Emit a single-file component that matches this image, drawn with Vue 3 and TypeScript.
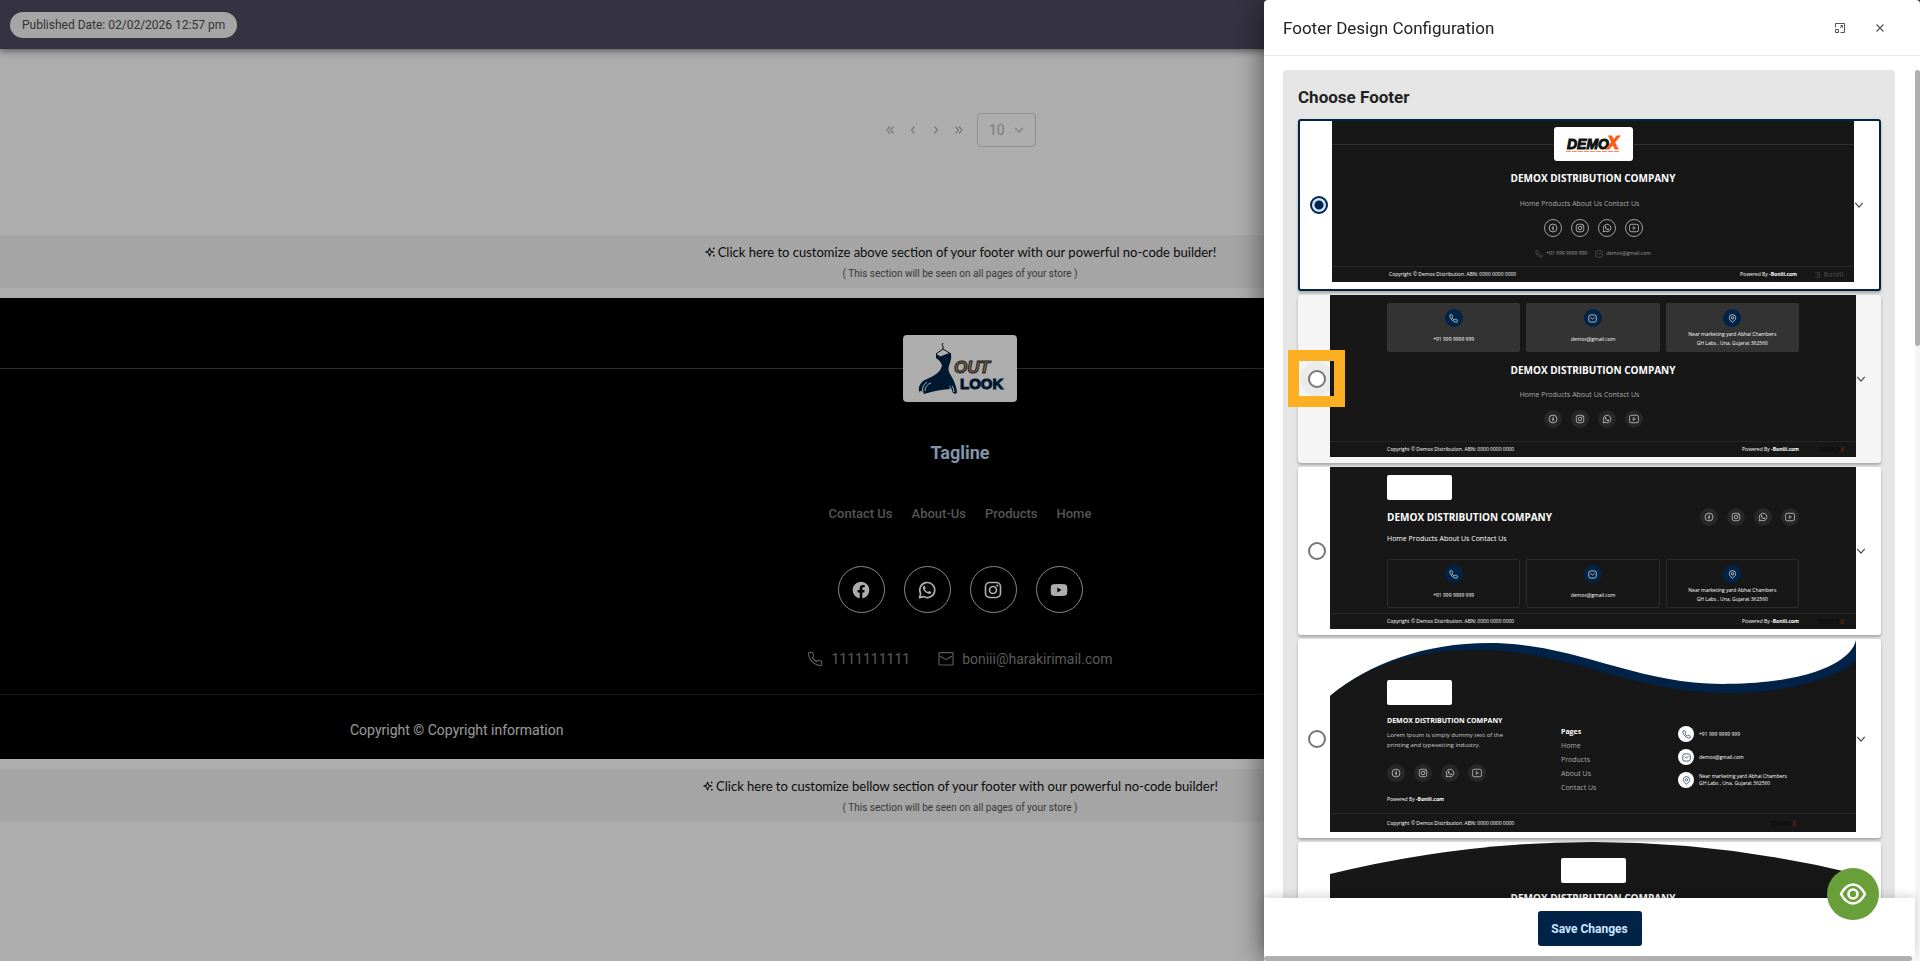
<script setup lang="ts">
import { ref } from 'vue'

const selected = ref<string>('classic')
const pageSize = ref<number>(10)

const company = 'DEMOX DISTRIBUTION COMPANY'
const copyright = 'Copyright © Demox Distribution. ABN: 0000 0000 0000'
const phone = '+91 999 9999 999'
const email = 'demox@gmail.com'
const navText = 'Home Products About Us Contact Us'

const options: string[] = ['classic', 'cards', 'split', 'wave', 'arch']
const pagers = [
  { icon: 'i-first', label: 'First page' },
  { icon: 'i-prev', label: 'Previous page' },
  { icon: 'i-next', label: 'Next page' },
  { icon: 'i-last', label: 'Last page' },
]
const links: string[] = ['Contact Us', 'About-Us', 'Products', 'Home']
const socials = [
  { icon: 'i-facebook', label: 'Facebook' },
  { icon: 'i-whatsapp', label: 'WhatsApp' },
  { icon: 'i-instagram', label: 'Instagram' },
  { icon: 'i-youtube', label: 'YouTube' },
]
const miniSocials: string[] = ['i-fb-line', 'i-instagram', 'i-whatsapp', 'i-yt-line']
const miniCards = [
  { icon: 'i-phone', lines: [phone] },
  { icon: 'i-mail', lines: [email] },
  { icon: 'i-pin', lines: ['Near marketing yard Abhai Chambers', 'GH Labs , Una, Gujarat 362560'] },
]
const miniPages: string[] = ['Home', 'Products', 'About Us', 'Contact Us']
</script>

<template>
  <svg class="sprite" aria-hidden="true">
    <symbol id="i-first" viewBox="0 0 12 12"><path d="M6 2.500 3 6 6 9.500M9.500 2.500 6.500 6 9.500 9.500" fill="none" stroke="currentColor" stroke-width="1.200" /></symbol>
    <symbol id="i-prev" viewBox="0 0 12 12"><path d="M7.500 2.500 4.500 6l3 3.500" fill="none" stroke="currentColor" stroke-width="1.200" /></symbol>
    <symbol id="i-next" viewBox="0 0 12 12"><path d="M4.500 2.500 7.500 6l-3 3.500" fill="none" stroke="currentColor" stroke-width="1.200" /></symbol>
    <symbol id="i-last" viewBox="0 0 12 12"><path d="M2.500 2.500l3 3.500-3 3.500M6 2.500 9 6 6 9.500" fill="none" stroke="currentColor" stroke-width="1.200" /></symbol>
    <symbol id="i-down" viewBox="0 0 12 12"><path d="M1.500 3.500 6 8.500l4.500-5" fill="none" stroke="currentColor" stroke-width="1.400" stroke-linejoin="round" /></symbol>
    <symbol id="i-close" viewBox="0 0 12 12"><path d="M2.500 2.500l7 7M9.500 2.500l-7 7" fill="none" stroke="currentColor" stroke-width="1.200" /></symbol>
    <symbol id="i-expand" viewBox="0 0 14 14"><path d="M2.500 6.500V2.500h9v9H7.500M2.500 8.500h3v3h-3zM7 7l2.500-2.500M7.500 4.500h2v2" fill="none" stroke="currentColor" stroke-width="1" stroke-linejoin="round" /></symbol>
    <symbol id="i-spark" viewBox="0 0 14 14"><path d="M6.500 2.500 7.700 5.900 11 7.100 7.700 8.300 6.500 11.700 5.300 8.300 2 7.100 5.300 5.900Z" fill="none" stroke="currentColor" stroke-width="1.200" stroke-linejoin="round" /><circle cx="11.300" cy="2.800" r="1" fill="currentColor" /><circle cx="11.500" cy="11.300" r="1" fill="currentColor" /></symbol>
    <symbol id="i-facebook" viewBox="0 0 24 24"><path fill="currentColor" d="M12 2.040C6.500 2.040 2 6.530 2 12.060C2 17.060 5.660 21.210 10.440 21.960V14.960H7.900V12.060H10.440V9.850C10.440 7.340 11.930 5.960 14.220 5.960C15.310 5.960 16.450 6.150 16.450 6.150V8.620H15.190C13.950 8.620 13.560 9.390 13.560 10.180V12.060H16.340L15.890 14.960H13.560V21.960A10 10 0 0 0 22 12.060C22 6.530 17.500 2.040 12 2.040Z" /></symbol>
    <symbol id="i-whatsapp" viewBox="0 0 24 24"><path d="M3 21.200 4.400 16.400A9 9 0 1 1 7.900 19.900Z" fill="none" stroke="currentColor" stroke-width="2" stroke-linejoin="round" /><path fill="currentColor" d="M8.530 7C8.370 7 8.100 7.100 7.870 7.400C7.300 8 7 8.500 7 9.700C7 10.930 7.890 12.100 8 12.270C8.140 12.440 9.760 14.940 12.250 16C13.900 16.700 14.790 16.690 15.220 16.630C15.700 16.560 16.680 16.030 16.890 15.450C17.100 14.870 17.100 14.380 17.040 14.270C16.970 14.170 15.090 13.260 14.870 13.180C14.640 13.100 14.500 13.060 14.310 13.300L13.530 14.270C13.380 14.440 13.240 14.460 13 14.340C11.500 13.700 10.260 12.450 9.620 11.390C9.500 11.150 9.610 11 9.730 10.890L10.350 10.040C10.430 9.870 10.390 9.730 10.330 9.610L9.560 7.500C9.360 7.100 9.160 7 8.530 7Z" /></symbol>
    <symbol id="i-instagram" viewBox="0 0 24 24"><rect x="3" y="3" width="18" height="18" rx="5" fill="none" stroke="currentColor" stroke-width="2" /><circle cx="12" cy="12" r="4.200" fill="none" stroke="currentColor" stroke-width="2" /><circle cx="17.200" cy="6.800" r="1.300" fill="currentColor" /></symbol>
    <symbol id="i-youtube" viewBox="0 0 24 24"><path fill="currentColor" fill-rule="evenodd" d="M5 5Q12 4.400 19 5Q21.600 5.200 21.800 8Q22.200 12 21.800 16Q21.600 18.800 19 19Q12 19.600 5 19Q2.400 18.800 2.200 16Q1.800 12 2.200 8Q2.400 5.200 5 5ZM10 9V15L15 12Z" /></symbol>
    <symbol id="i-fb-line" viewBox="0 0 24 24"><circle cx="12" cy="12" r="9.500" fill="none" stroke="currentColor" stroke-width="2" /><path d="M14.500 7.500H13.500Q12 7.500 12 9.500V18M9 12.500H14.500" fill="none" stroke="currentColor" stroke-width="2" /></symbol>
    <symbol id="i-yt-line" viewBox="0 0 24 24"><rect x="1" y="3" width="22" height="18" rx="5" fill="none" stroke="currentColor" stroke-width="2" /><path d="M10 8.500V15.500L15.500 12Z" fill="none" stroke="currentColor" stroke-width="1.600" stroke-linejoin="round" /></symbol>
    <symbol id="i-phone" viewBox="0 0 24 24"><path fill="none" stroke="currentColor" stroke-width="1.800" stroke-linejoin="round" d="M22 16.920v3a2 2 0 0 1-2.180 2 19.790 19.790 0 0 1-8.630-3.070 19.500 19.500 0 0 1-6-6 19.790 19.790 0 0 1-3.070-8.670A2 2 0 0 1 4.110 2h3a2 2 0 0 1 2 1.720 12.840 12.840 0 0 0 .7 2.810 2 2 0 0 1-.45 2.110L8.090 9.910a16 16 0 0 0 6 6l1.270-1.270a2 2 0 0 1 2.110-.45 12.840 12.840 0 0 0 2.810.7A2 2 0 0 1 22 16.920z" /></symbol>
    <symbol id="i-envelope" viewBox="0 0 24 24"><rect x="1.500" y="2.500" width="21" height="18.500" rx="1" fill="none" stroke="currentColor" stroke-width="1.800" /><path d="M3 8Q4 8 6 9.500L12 13 18 9.500Q20 8 21 8" fill="none" stroke="currentColor" stroke-width="1.800" /></symbol>
    <symbol id="i-mail" viewBox="0 0 24 24"><rect x="2" y="2.500" width="20" height="19" rx="5" fill="none" stroke="currentColor" stroke-width="1.800" /><path d="M6.500 9 12 13.500 17.500 9" fill="none" stroke="currentColor" stroke-width="1.800" /></symbol>
    <symbol id="i-pin" viewBox="0 0 24 24"><path d="M12 22C6 17 3.500 13.500 3.500 10a8.500 8.500 0 0 1 17 0C20.500 13.500 18 17 12 22Z" fill="none" stroke="currentColor" stroke-width="1.800" /><circle cx="12" cy="10" r="3" fill="none" stroke="currentColor" stroke-width="1.800" /></symbol>
    <symbol id="i-eye" viewBox="0 0 28 28"><path d="M2 14Q7 4.500 14 4.500T26 14Q21 23.500 14 23.500T2 14Z" fill="none" stroke="currentColor" stroke-width="2.600" stroke-linejoin="round" /><circle cx="14" cy="14" r="4.500" fill="none" stroke="currentColor" stroke-width="2.600" /></symbol>
  </svg>

  <div class="page">
    <header class="topbar"><span class="pill">Published Date: 02/02/2026 12:57 pm</span></header>

    <nav class="pagination" aria-label="Pagination">
      <button v-for="p in pagers" :key="p.icon" type="button" :aria-label="p.label">
        <svg class="ic12"><use :href="'#' + p.icon" /></svg>
      </button>
      <span class="size">
        <select v-model="pageSize" aria-label="Rows per page">
          <option :value="10">10</option>
          <option :value="20">20</option>
        </select>
        <svg class="ic10"><use href="#i-down" /></svg>
      </span>
    </nav>

    <button type="button" class="band">
      <span class="band-title"><svg class="ic12"><use href="#i-spark" /></svg>Click here to customize above section of your footer with our powerful no-code builder!</span>
      <span class="band-note">( This section will be seen on all pages of your store )</span>
    </button>

    <footer class="store">
      <div class="brand-row">
        <span class="rule"></span>
        <span class="brand">
          <svg viewBox="0 0 114 67" width="114" height="67" role="img" aria-label="Outlook">
            <path d="M40 14V11q-2-1 0-3M33 19 40 14 48 19" fill="none" stroke="#111" stroke-width="1" />
            <path d="M33 18Q36 23 41 20Q45 18 48 18Q49 23 47 28Q44 34 47 39Q53 48 54 57Q54 60 50 58Q49 54 46 50L47 54Q33 55 21 59Q17 53 17 58Q15 55 16 52Q18 46 24 44Q37 39 39 31Q38 26 33 23Z" fill="#002347" />
            <path d="M20 58Q18 51 24 47M28 48Q22 50 22 56M49 51Q51 54 51 57" fill="none" stroke="#fff" stroke-width="1" />
            <text x="57" y="54" class="logo-look">LOOK</text>
            <text x="51" y="38" class="logo-out">OUT</text>
          </svg>
        </span>
        <span class="rule"></span>
      </div>
      <h2 class="tagline">Tagline</h2>
      <nav class="store-links" aria-label="Footer">
        <a v-for="l in links" :key="l" href="#">{{ l }}</a>
      </nav>
      <div class="store-social">
        <a v-for="s in socials" :key="s.icon" href="#" :aria-label="s.label">
          <svg class="ic20"><use :href="'#' + s.icon" /></svg>
        </a>
      </div>
      <div class="store-contact">
        <a href="#"><svg class="ic16"><use href="#i-phone" /></svg>1111111111</a>
        <a href="#"><svg class="ic16"><use href="#i-envelope" /></svg>boniii@harakirimail.com</a>
      </div>
      <div class="store-copy"><p>Copyright © Copyright information</p></div>
    </footer>

    <button type="button" class="band">
      <span class="band-title"><svg class="ic12"><use href="#i-spark" /></svg>Click here to customize bellow section of your footer with our powerful no-code builder!</span>
      <span class="band-note">( This section will be seen on all pages of your store )</span>
    </button>
  </div>

  <div class="mask"></div>

  <aside class="drawer" role="dialog" aria-labelledby="drawer-title">
    <header class="drawer-head">
      <h1 id="drawer-title">Footer Design Configuration</h1>
      <button type="button" aria-label="Expand"><svg class="ic14"><use href="#i-expand" /></svg></button>
      <button type="button" aria-label="Close"><svg class="ic12"><use href="#i-close" /></svg></button>
    </header>

    <div class="drawer-body">
      <div class="drawer-main">
        <div class="scroller">
          <section class="card">
            <h2>Choose Footer</h2>
            <div
              v-for="o in options"
              :key="o"
              class="option"
              :class="{ chosen: selected === o, hovered: o === 'cards' }"
            >
              <div class="pick">
                <input v-model="selected" type="radio" name="footer" :value="o" :aria-label="'Footer design ' + o" />
                <span v-if="o === 'cards'" class="marker"></span>
              </div>

              <div v-if="o === 'classic'" class="pv classic">
                <div class="pv-brand">
                  <span class="rule"></span>
                  <span class="pv-logo">
                    <svg viewBox="0 0 79 34" width="79" height="34" role="img" aria-label="Demox">
                      <text x="13" y="22" class="logo-demo">DEMO</text>
                      <text x="53" y="22" class="logo-x">X</text>
                      <path d="M12 24.500H65" stroke="#ff5a12" stroke-width="1" stroke-dasharray="5 1" opacity=".7" />
                    </svg>
                  </span>
                  <span class="rule"></span>
                </div>
                <p class="pv-title">{{ company }}</p>
                <p class="pv-nav">{{ navText }}</p>
                <div class="pv-social ringed"><span v-for="s in miniSocials" :key="s"><svg><use :href="'#' + s" /></svg></span></div>
                <div class="pv-contact">
                  <span><svg><use href="#i-phone" /></svg>{{ phone }}</span>
                  <span><svg><use href="#i-mail" /></svg>{{ email }}</span>
                </div>
                <div class="pv-end"><span>{{ copyright }}</span><span class="push">Powered By <b>-Boniii.com</b></span><span class="ghost"><svg viewBox="0 0 8 8"><path d="M0 1H6V7H1M2 4H6" fill="none" stroke="currentColor" stroke-width="1.500" /></svg>Boniii</span></div>
              </div>

              <div v-else-if="o === 'cards'" class="pv cards">
                <div class="pv-cards filled">
                  <div v-for="c in miniCards" :key="c.icon">
                    <span class="dot"><svg><use :href="'#' + c.icon" /></svg></span>
                    <p><span v-for="l in c.lines" :key="l">{{ l }}</span></p>
                  </div>
                </div>
                <p class="pv-title">{{ company }}</p>
                <p class="pv-nav">{{ navText }}</p>
                <div class="pv-social"><span v-for="s in miniSocials" :key="s"><svg><use :href="'#' + s" /></svg></span></div>
                <div class="pv-end"><span>{{ copyright }}</span><span class="push">Powered By <b>-Boniii.com</b></span><span class="ghost mark">DEMO<i>X</i></span></div>
              </div>

              <div v-else-if="o === 'split'" class="pv split">
                <span class="blank"></span>
                <div class="pv-row">
                  <p class="pv-title">{{ company }}</p>
                  <div class="pv-social"><span v-for="s in miniSocials" :key="s"><svg><use :href="'#' + s" /></svg></span></div>
                </div>
                <p class="pv-nav">{{ navText }}</p>
                <div class="pv-cards">
                  <div v-for="c in miniCards" :key="c.icon">
                    <span class="dot"><svg><use :href="'#' + c.icon" /></svg></span>
                    <p><span v-for="l in c.lines" :key="l">{{ l }}</span></p>
                  </div>
                </div>
                <div class="pv-end"><span>{{ copyright }}</span><span class="push">Powered By <b>-Boniii.com</b></span><span class="ghost mark">DEMO<i>X</i></span></div>
              </div>

              <div v-else-if="o === 'wave'" class="pv wave">
                <svg class="shape" viewBox="0 0 526 193" preserveAspectRatio="none">
                  <path d="M0 57C40 24 95 4 159 4C245 4 305 45 392 45C480 45 522 22 526 1V193H0Z" fill="#002347" />
                  <path d="M0 57C38 26 85 11 147 11C240 11 300 54 400 54C455 54 505 40 526 22V193H0Z" fill="#171717" />
                </svg>
                <span class="blank"></span>
                <div class="wave-cols">
                  <div class="about">
                    <p class="pv-sub">{{ company }}</p>
                    <p class="lorem">Lorem Ipsum is simply dummy text of the printing and typesetting industry.</p>
                    <div class="pv-social"><span v-for="s in miniSocials" :key="s"><svg><use :href="'#' + s" /></svg></span></div>
                    <p class="powered">Powered By <b>-Boniii.com</b></p>
                  </div>
                  <ul class="pages">
                    <li><b>Pages</b></li>
                    <li v-for="p in miniPages" :key="p">{{ p }}</li>
                  </ul>
                  <ul class="reach">
                    <li v-for="c in miniCards" :key="c.icon">
                      <span class="dot light"><svg><use :href="'#' + c.icon" /></svg></span>
                      <p><span v-for="l in c.lines" :key="l">{{ l }}</span></p>
                    </li>
                  </ul>
                </div>
                <div class="pv-end"><span>{{ copyright }}</span><span class="ghost mark push inset">DEMO<i>X</i></span></div>
              </div>

              <div v-else class="pv arch">
                <svg class="shape" viewBox="0 0 526 193" preserveAspectRatio="none"><path d="M0 32Q263-32 526 32V193H0Z" fill="#171717" /></svg>
                <span class="blank"></span>
                <p class="pv-title">{{ company }}</p>
              </div>

              <button type="button" class="more" aria-label="Show details"><svg class="ic10"><use href="#i-down" /></svg></button>
            </div>
          </section>
        </div>
        <footer class="drawer-foot"><button type="button">Save Changes</button></footer>
        <div class="hbar"><span></span></div>
      </div>
      <div class="rail"><span></span></div>
    </div>
  </aside>

  <button type="button" class="fab" aria-label="Preview"><svg><use href="#i-eye" /></svg></button>
</template>

<style>
body {
  background: #fff;
}
</style>

<style scoped>
* {
  box-sizing: border-box;
}
.page,
.drawer,
button,
select {
  font-family: Roboto, 'Liberation Sans', sans-serif;
}
h1,
h2,
p,
ul {
  margin: 0;
  padding: 0;
}
button {
  padding: 0;
  border: 0;
  background: none;
  color: inherit;
}
a {
  color: inherit;
  text-decoration: none;
}
svg {
  display: block;
  flex: none;
}
.sprite {
  position: absolute;
  width: 0;
  height: 0;
}
.ic10 { width: 10px; height: 10px; }
.ic12 { width: 12px; height: 12px; }
.ic14 { width: 14px; height: 14px; }
.ic16 { width: 16px; height: 16px; }
.ic20 { width: 20px; height: 20px; }

.page {
  min-height: 100vh;
  background: #fff;
}
.topbar {
  display: flex;
  align-items: center;
  height: 49px;
  padding: 0 10px;
  background: #4e4b60;
  box-shadow: 0 1px 8px rgba(0, 0, 0, 0.6);
}
.pill {
  padding: 0 12px;
  border-radius: 13px;
  background: #f3f3f3;
  color: #4c4c4c;
  font-size: 12px;
  line-height: 26px;
}
.pagination {
  display: flex;
  align-items: center;
  justify-content: center;
  margin: 64px 0 88px;
  padding-right: 6px;
  color: #b4b4b4;
}
.pagination button {
  display: grid;
  place-items: center;
  width: 23px;
  height: 24px;
}
.size {
  display: flex;
  align-items: center;
  margin-left: 7px;
  padding-right: 11px;
  border: 1px solid #d4d4d4;
  border-radius: 4px;
}
.size select {
  appearance: none;
  width: 36px;
  height: 32px;
  padding: 0 0 0 11px;
  border: 0;
  background: none;
  color: #b4b4b4;
  font-size: 14px;
}
.band {
  display: flex;
  flex-direction: column;
  align-items: center;
  width: 100%;
  height: 53px;
  padding-top: 7px;
  background: #f3f3f3;
}
.band-title {
  display: flex;
  align-items: center;
  gap: 2px;
  color: #111;
  font-family: Lato, Roboto, sans-serif;
  font-size: 13px;
  line-height: 20px;
}
.band-note {
  color: #555;
  font-size: 10px;
  line-height: 23px;
}
.store {
  margin: 10px 0;
  padding-top: 37px;
  background: #000;
}
.brand-row,
.pv-brand {
  display: flex;
  align-items: center;
}
.rule {
  flex: 1;
  height: 1px;
  background: #444;
}
.brand {
  overflow: hidden;
  border-radius: 4px;
  background: #fff;
}
.logo-look {
  font: bold 15px 'Liberation Sans', Arial, sans-serif;
  fill: #002347;
  stroke: #002347;
  stroke-width: 1px;
}
.logo-out {
  font: italic bold 17px 'Liberation Sans', Arial, sans-serif;
  fill: #b9a48c;
  stroke: #2b221a;
  stroke-width: 1px;
}
.tagline {
  margin-top: 38px;
  color: #bfdbf7;
  font-size: 18px;
  line-height: 26px;
  text-align: center;
}
.store-links,
.store-social,
.store-contact {
  display: flex;
  justify-content: center;
}
.store-links {
  gap: 19px;
  margin-top: 38px;
  color: #7e7e7e;
  font-size: 13px;
  font-weight: 500;
  line-height: 20px;
}
.store-social {
  gap: 19px;
  margin-top: 42px;
}
.store-social a {
  display: grid;
  place-items: center;
  width: 47px;
  height: 47px;
  border: 1px solid #c9c9c9;
  border-radius: 50%;
  color: #fff;
}
.store-contact {
  gap: 28px;
  margin-top: 36px;
  color: #858585;
  font-size: 14px;
  line-height: 20px;
}
.store-contact a {
  display: flex;
  align-items: center;
  gap: 8px;
}
.store-copy {
  margin-top: 25px;
  padding: 25px 0 19px;
  border-top: 1px solid #242424;
}
.store-copy p {
  max-width: 1220px;
  margin: 0 auto;
  color: #e0e0e0;
  font-size: 14px;
  line-height: 20px;
}
.mask {
  position: fixed;
  inset: 0;
  background: rgba(0, 0, 0, 0.32);
}

.drawer {
  position: fixed;
  top: 0;
  right: 0;
  bottom: 0;
  display: flex;
  flex-direction: column;
  width: 656px;
  max-width: 100%;
  border-radius: 4px 4px 0 0;
  background: #fff;
  box-shadow: -2px 0 28px rgba(0, 0, 0, 0.5);
}
.drawer-head {
  display: flex;
  align-items: center;
  gap: 16px;
  height: 56px;
  padding: 0 28px 0 19px;
  border-bottom: 1px solid #e8e8e8;
  color: #555;
}
.drawer-head h1 {
  flex: 1;
  color: #222;
  font-size: 17px;
  font-weight: 400;
  line-height: 24px;
}
.drawer-head button {
  display: grid;
  place-items: center;
  width: 24px;
  height: 24px;
}
.drawer-body {
  display: flex;
  flex: 1;
  min-height: 0;
}
.drawer-main {
  display: flex;
  flex: 1;
  flex-direction: column;
  min-width: 0;
}
.scroller {
  flex: 1;
  min-height: 0;
  padding: 14px 20px 0 19px;
  overflow-y: auto;
  scrollbar-width: none;
}
.drawer-foot {
  position: relative;
  display: flex;
  justify-content: center;
  padding: 13px 0 10px;
  background: #fff;
  box-shadow: 0 -3px 8px rgba(0, 0, 0, 0.14);
}
.drawer-foot button {
  width: 104px;
  height: 35px;
  border-radius: 3px;
  background: #002347;
  color: #cfe6ff;
  font-size: 12px;
  font-weight: 700;
}
.hbar {
  position: relative;
  padding-right: 3px;
  background: #f4f4f4;
}
.hbar span,
.rail span {
  display: block;
  border-radius: 3px;
  background: #b0b0b0;
}
.hbar span { height: 5px; }
.rail {
  width: 5px;
  margin-top: 14px;
  background: #f5f5f5;
}
.rail span { height: 31%; }
.card {
  padding: 0 14px 14px 15px;
  border-radius: 4px 4px 0 0;
  background: #e5e5e5;
}
.card h2 {
  padding: 15px 0 10px;
  color: #222;
  font-size: 17px;
  font-weight: 700;
  line-height: 24px;
}
.option {
  display: grid;
  grid-template-columns: 32px 1fr 25px;
  align-items: center;
  margin-bottom: 4px;
  border-radius: 3px;
  background: #fff;
  box-shadow: 0 2px 3px rgba(0, 0, 0, 0.28);
}
.option.chosen {
  border: 2px solid #002347;
}
.option.hovered {
  background: #f5f5f5;
}
.pick {
  position: relative;
  padding-left: 10px;
}
.pick input {
  appearance: none;
  display: block;
  width: 18px;
  height: 18px;
  margin: 0;
  border: 2px solid #757575;
  border-radius: 50%;
  background: #fff;
}
.hovered .pick input {
  box-shadow: 0 0 0 8px #ebebeb;
}
.pick input:checked {
  border-color: #002347;
  background: radial-gradient(circle, #002347 0 4px, #c9e4ff 5px);
}
.marker {
  position: absolute;
  top: -20px;
  left: -10px;
  z-index: 2;
  width: 57px;
  height: 57px;
  border: 11px solid #fcaf23;
}
.more {
  display: grid;
  justify-content: start;
  color: #444;
}

.pv {
  position: relative;
  margin-bottom: 6px;
  background: #171717;
  color: #fff;
  font-family: 'Open Sans', 'Noto Sans', sans-serif;
  font-size: 5px;
  line-height: 9px;
}
.pv .rule { background: #303030; }
.pv-title {
  font-size: 10px;
  font-weight: 700;
  line-height: 14px;
  text-align: center;
}
.pv-nav {
  padding-right: 27px;
  color: #a9a9a9;
  font-size: 7px;
  line-height: 10px;
  text-align: center;
}
.pv-social {
  display: flex;
  justify-content: center;
  gap: 9px;
  color: #c4c4c4;
}
.pv-social span,
.dot {
  display: grid;
  place-items: center;
  width: 18px;
  height: 18px;
  border-radius: 50%;
  background: #272727;
}
.pv-social svg {
  width: 10px;
  height: 10px;
}
.ringed span {
  border: 1px solid #a0a0a0;
  background: none;
}
.pv-contact {
  display: flex;
  justify-content: center;
  gap: 8px;
  color: #9a9a9a;
}
.pv-contact span {
  display: flex;
  align-items: center;
  gap: 3px;
}
.pv-contact svg {
  width: 8px;
  height: 8px;
  color: #666;
}
.pv-end {
  position: relative;
  display: flex;
  align-items: center;
  height: 16px;
  padding: 0 8px 0 57px;
  border-top: 1px solid #272727;
}
.push { margin-left: auto; }
.ghost {
  display: flex;
  align-items: center;
  justify-content: center;
  gap: 2px;
  width: 49px;
  padding-left: 16px;
  color: #3a3a3a;
  font-size: 7px;
  font-weight: 700;
}
.ghost svg {
  width: 6px;
  height: 6px;
}
.ghost.mark {
  gap: 0;
  color: #0d0d0d;
}
.ghost.mark i { color: #55260f; }
.ghost.inset { margin-right: 48px; }

.classic {
  margin-bottom: 7px;
  padding-top: 6px;
}
.pv-logo {
  border-radius: 3px;
  background: #fff;
}
.logo-demo {
  font: italic bold 14px 'Liberation Sans', Arial, sans-serif;
  fill: #111;
  stroke: #111;
  stroke-width: 1px;
}
.logo-x {
  font: italic bold 18px 'Liberation Sans', Arial, sans-serif;
  fill: #ff5a12;
  stroke: #ff5a12;
  stroke-width: 1px;
}
.classic .pv-title { margin-top: 10px; }
.classic .pv-nav { margin-top: 14px; }
.classic .pv-social { margin-top: 10px; }
.classic .pv-contact { margin: 12px 0 8px; }

.pv-cards {
  display: grid;
  grid-template-columns: repeat(3, 1fr);
  gap: 6px;
  padding: 0 57px;
  text-align: center;
}
.pv-cards > div {
  display: flex;
  flex-direction: column;
  align-items: center;
  height: 49px;
  padding-top: 5px;
  border: 1px solid #2b2b2b;
  border-radius: 2px;
}
.pv-cards.filled > div {
  border-color: #343434;
  background: #333;
}
.pv-cards p {
  display: flex;
  flex: 1;
  flex-direction: column;
  justify-content: center;
}
.dot {
  background: #002347;
}
.dot svg {
  width: 9px;
  height: 9px;
}
.cards { padding-top: 8px; }
.cards .pv-title { margin-top: 11px; }
.cards .pv-nav { margin-top: 13px; }
.cards .pv-social { margin: 10px 0 13px; }

.blank {
  position: relative;
  display: block;
  width: 65px;
  height: 25px;
  margin-left: 57px;
  border-radius: 2px;
  background: #fff;
}
.split { padding-top: 8px; }
.pv-row {
  display: flex;
  align-items: center;
  justify-content: space-between;
  margin-top: 8px;
  padding: 0 57px;
}
.split .pv-nav {
  margin: 8px 57px 15px;
  padding: 0;
  color: #fff;
  text-align: left;
}
.split .pv-end { margin-top: 5px; }

.wave,
.arch {
  background: none;
}
.shape {
  position: absolute;
  inset: 0;
  width: 100%;
  height: 100%;
}
.wave { padding-top: 41px; }
.wave-cols {
  position: relative;
  display: flex;
  height: 108px;
  padding: 0 57px;
}
.about {
  flex: 0 0 174px;
  padding-top: 10px;
}
.pv-sub {
  font-size: 7px;
  font-weight: 700;
  line-height: 12px;
  white-space: nowrap;
}
.lorem {
  width: 124px;
  margin-top: 3px;
  color: #ccc;
  font-size: 6px;
  line-height: 10px;
}
.about .pv-social {
  justify-content: flex-start;
  margin-top: 14px;
}
.powered { margin-top: 13px; }
.pages,
.reach {
  list-style: none;
}
.pages {
  flex: 0 0 117px;
  padding-top: 20px;
  color: #a9a9a9;
  font-size: 7px;
  line-height: 14px;
}
.pages b { color: #fff; }
.reach {
  display: flex;
  flex-direction: column;
  gap: 7px;
  padding-top: 21px;
}
.reach li {
  display: flex;
  align-items: center;
  gap: 5px;
  white-space: nowrap;
}
.reach p span {
  display: block;
  line-height: 7px;
}
.dot.light {
  width: 16px;
  height: 16px;
  background: #fff;
  color: #002347;
}
.wave .pv-end { height: 19px; }

.arch {
  height: 193px;
  padding-top: 16px;
}
.arch .blank { margin: 0 auto; }
.arch .pv-title {
  position: relative;
  margin-top: 8px;
}

.fab {
  position: fixed;
  right: 41px;
  bottom: 41px;
  display: grid;
  place-items: center;
  width: 52px;
  height: 52px;
  border-radius: 50%;
  background: #689f38;
  color: #fff;
}
.fab svg {
  width: 28px;
  height: 28px;
}
</style>
